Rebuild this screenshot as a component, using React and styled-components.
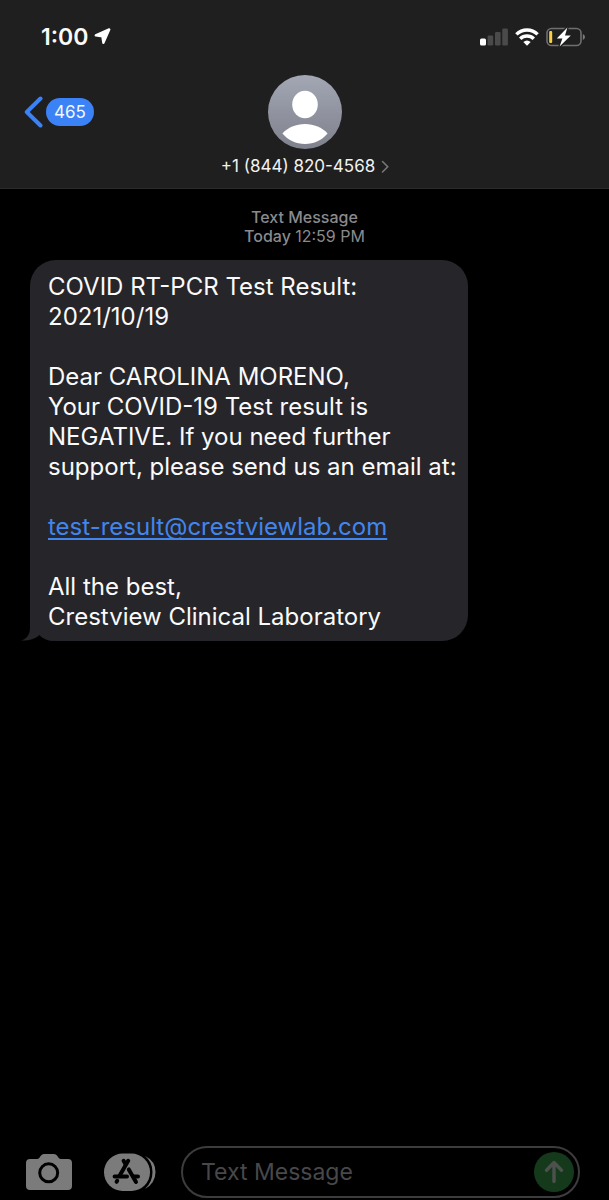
import React from "react";
import styled, { createGlobalStyle } from "styled-components";

const GlobalStyle = createGlobalStyle`
  * {
    box-sizing: border-box;
  }
  body {
    margin: 0;
    background-color: #000000;
    font-family: Inter, "Liberation Sans", sans-serif;
  }
`;

const Screen = styled.div`
  display: flex;
  flex-direction: column;
  min-height: 100vh;
  background-color: #000000;
  color: #fafafa;
`;
const Header = styled.header`
  background-color: #1f1f1f;
  border-bottom: 1px solid #2b2b2c;
`;
const StatusBar = styled.div`
  display: flex;
  align-items: center;
  justify-content: space-between;
  height: 75px;
  padding: 0 24px 2px 41px;
`;
const StatusGroup = styled.div`
  display: flex;
  align-items: center;
  gap: ${(props) => props.$gap};
`;
const Time = styled.span`
  font-size: 23px;
  line-height: 28px;
  font-weight: 600;
`;
const Nav = styled.nav`
  display: grid;
  grid-template-columns: 1fr auto 1fr;
  align-items: start;
  padding: 0 23px 11px 24px;
`;
const BackButton = styled.button`
  display: flex;
  align-items: center;
  justify-self: start;
  gap: 3px;
  height: 74px;
  padding: 0;
  border: none;
  background: none;
  font-family: inherit;
`;
const Badge = styled.span`
  padding: 0 8px;
  border-radius: 14px;
  background-color: #3b82f6;
  color: #f4f8ff;
  font-size: 17px;
  line-height: 28px;
`;
const Contact = styled.button`
  display: flex;
  flex-direction: column;
  align-items: center;
  gap: 7px;
  padding: 0;
  border: none;
  background: none;
  color: #f2f2f2;
  font-family: inherit;
`;
const ContactName = styled.span`
  display: flex;
  align-items: center;
  gap: 6px;
  font-size: 17px;
  line-height: 21px;
`;
const Thread = styled.main`
  flex: 1;
  padding: 19px 30px;
`;
const Stamp = styled.p`
  margin: 0 0 14px;
  color: #8a8a8d;
  font-size: 16px;
  line-height: 19px;
  font-weight: 500;
  text-align: center;
`;
const StampTime = styled.span`
  font-weight: 400;
`;
const Bubble = styled.div`
  position: relative;
  width: fit-content;
  max-width: 82%;
  padding: 12px 11px 9px 18px;
  border-radius: 26px;
  background-color: #26252a;
`;
const Tail = styled.svg`
  position: absolute;
  left: -9px;
  bottom: 0;
`;
const BubbleText = styled.p`
  position: relative;
  margin: 0 0 30px;
  font-size: 24px;
  line-height: 30px;

  &:last-child {
    margin-bottom: 0;
  }
`;
const MailLink = styled.a`
  color: #4285ec;
  text-decoration: underline;
  text-decoration-thickness: 2px;
  text-decoration-skip-ink: none;
  text-underline-offset: 3px;
`;
const Composer = styled.form`
  display: flex;
  align-items: center;
  padding: 0 29px 2px 26px;
`;
const IconButton = styled.button`
  display: flex;
  margin-right: ${(props) => props.$space};
  padding: 0;
  border: none;
  background: none;
`;
const Field = styled.div`
  display: flex;
  flex: 1;
  align-items: center;
  min-width: 0;
  height: 52px;
  padding: 0 4px 0 18px;
  border: 2px solid #3c3c3e;
  border-radius: 26px;
`;
const Input = styled.input`
  flex: 1;
  min-width: 0;
  padding: 0;
  border: none;
  outline: none;
  background: none;
  color: #fafafa;
  font-family: inherit;
  font-size: 23px;
  line-height: 30px;

  &::placeholder {
    color: #48484a;
    opacity: 1;
  }
`;
const SendButton = styled.button`
  display: flex;
  align-items: center;
  justify-content: center;
  width: 40px;
  height: 40px;
  padding: 0;
  border: none;
  border-radius: 50%;
  background-color: #153a1b;
`;

const LocationIcon = () => (
  <svg width="17" height="17" viewBox="0 0 17 17">
    <path
      d="M1.8 7.4 15.2 1.4 9.4 14.8 8.4 8.2Z"
      fill="#ffffff"
      stroke="#ffffff"
      strokeWidth="2.4"
      strokeLinejoin="round"
    />
  </svg>
);

const SignalIcon = () => (
  <svg width="28" height="18" viewBox="0 0 28 18">
    <rect x="0" y="10.5" width="6" height="7" rx="1.5" fill="#ffffff" />
    <rect x="7.6" y="7.5" width="5.6" height="10" rx="1.2" fill="#4a4a4a" />
    <rect x="15" y="4" width="5.6" height="13.5" rx="1.2" fill="#4a4a4a" />
    <rect x="22.3" y="0.5" width="5.6" height="17" rx="1.2" fill="#4a4a4a" />
  </svg>
);

const WifiIcon = () => (
  <svg width="24" height="18" viewBox="0 0 24 18">
    <g fill="none" stroke="#ffffff" strokeWidth="3.4">
      <path d="M1.4 6.4A15 15 0 0 1 22.6 6.4" />
      <path d="M5.2 10.8A9.6 9.6 0 0 1 18.8 10.8" />
    </g>
    <path d="M8.3 14Q12 11 15.7 14L12 17.8Z" fill="#ffffff" />
  </svg>
);

const BatteryIcon = () => (
  <svg width="39" height="20" viewBox="0 0 39 20">
    <rect x="1" y="1.5" width="34" height="17" rx="4.5" fill="none" stroke="#6f6f6f" strokeWidth="1.6" />
    <path d="M36.8 7Q39 8 39 10T36.8 13Z" fill="#7a7a7a" />
    <rect x="3.2" y="4" width="3" height="12" rx="1" fill="#f7ce46" />
    <path
      d="M21.4.4 10.8 11.4H16.4L13.6 19.6 24.8 8.4H19Z"
      fill="#ffffff"
      stroke="#1f1f1f"
      strokeWidth="2.6"
      strokeLinejoin="round"
      paintOrder="stroke"
    />
  </svg>
);

const BackIcon = () => (
  <svg width="19" height="32" viewBox="0 0 19 32">
    <path
      d="M16.5 2.5 2.8 16 16.5 29.5"
      fill="none"
      stroke="#3b82f6"
      strokeWidth="4"
      strokeLinecap="round"
      strokeLinejoin="round"
    />
  </svg>
);

const Avatar = () => (
  <svg width="74" height="74" viewBox="0 0 74 74">
    <defs>
      <linearGradient id="avatar" x1="0" y1="0" x2="0" y2="1">
        <stop offset="0" stopColor="#a3a7b4" />
        <stop offset="1" stopColor="#7f818c" />
      </linearGradient>
    </defs>
    <circle cx="37" cy="37" r="37" fill="url(#avatar)" />
    <ellipse cx="37" cy="29.5" rx="12.8" ry="13.8" fill="#ffffff" />
    <path d="M14.4 58.5C20 52.5 28 49 37 49S54 52.5 59.6 58.5C54 65 46 69 37 69S20 65 14.4 58.5Z" fill="#ffffff" />
  </svg>
);

const ChevronIcon = () => (
  <svg width="8" height="13" viewBox="0 0 8 13">
    <path d="M1.5 1.5 6.7 6.8 1.5 12" fill="none" stroke="#77777b" strokeWidth="1.6" strokeLinecap="round" />
  </svg>
);

const CameraIcon = () => (
  <svg width="46" height="36" viewBox="0 0 46 36">
    <path
      d="M4 5H11Q12.5 5 13.4 3.8L14.8 1.8Q16 0 18 0H28Q30 0 31.2 1.8L32.6 3.8Q33.5 5 35 5H42Q46 5 46 9V32Q46 36 42 36H4Q0 36 0 32V9Q0 5 4 5Z"
      fill="#7b7b7b"
    />
    <circle cx="22.7" cy="18.8" r="9" fill="none" stroke="#000000" strokeWidth="3" />
  </svg>
);

const AppStoreIcon = () => (
  <svg width="52" height="38" viewBox="0 0 52 38">
    <path d="M41 3Q51.5 8 51.5 19T41 36Q48.5 29 48.5 19T41 3Z" fill="#7b7b7b" />
    <rect x="0" y="0.5" width="46" height="37.5" rx="18.7" fill="#7b7b7b" />
    <g stroke="#000000" strokeWidth="4" strokeLinecap="round">
      <path d="M24.2 7.8 15.6 22.8M13.2 27.8 12.6 28.8" />
      <path d="M19.6 7.8 21.6 11.4M24.8 16.4 32 29" />
      <path d="M10.6 23.4H23M30 23.4H34" />
    </g>
  </svg>
);

const SendIcon = () => (
  <svg width="20" height="24" viewBox="0 0 20 24">
    <path
      d="M10 21.5V3M2.5 10.2 10 2.5 17.5 10.2"
      fill="none"
      stroke="#4d504d"
      strokeWidth="3.4"
      strokeLinecap="round"
      strokeLinejoin="round"
    />
  </svg>
);

const App = () => {
  return (
    <Screen>
      <GlobalStyle />
      <Header>
        <StatusBar>
          <StatusGroup $gap="6px">
            <Time>1:00</Time>
            <LocationIcon />
          </StatusGroup>
          <StatusGroup $gap="7px">
            <SignalIcon />
            <WifiIcon />
            <BatteryIcon />
          </StatusGroup>
        </StatusBar>
        <Nav>
          <BackButton type="button">
            <BackIcon />
            <Badge>465</Badge>
          </BackButton>
          <Contact type="button">
            <Avatar />
            <ContactName>
              +1 (844) 820-4568
              <ChevronIcon />
            </ContactName>
          </Contact>
        </Nav>
      </Header>
      <Thread>
        <Stamp>
          Text Message
          <br />
          Today <StampTime>12:59 PM</StampTime>
        </Stamp>
        <Bubble>
          <Tail width="34" height="25" viewBox="0 0 34 25">
            <path d="M9 0V12C9 18 6 23 0 24.5C7 25 14 23 18.5 19C22.5 23 27 25 33 25V0Z" fill="#26252a" />
          </Tail>
          <BubbleText>
            COVID RT-PCR Test Result:
            <br />
            2021/10/19
          </BubbleText>
          <BubbleText>
            Dear CAROLINA MORENO,
            <br />
            Your COVID-19 Test result is
            <br />
            NEGATIVE. If you need further
            <br />
            support, please send us an email at:
          </BubbleText>
          <BubbleText>
            <MailLink href="mailto:test-result@crestviewlab.com">
              test-result@crestviewlab.com
            </MailLink>
          </BubbleText>
          <BubbleText>
            All the best,
            <br />
            Crestview Clinical Laboratory
          </BubbleText>
        </Bubble>
      </Thread>
      <Composer>
        <IconButton type="button" aria-label="Camera" $space="32px">
          <CameraIcon />
        </IconButton>
        <IconButton type="button" aria-label="Apps" $space="25px">
          <AppStoreIcon />
        </IconButton>
        <Field>
          <Input type="text" aria-label="Text Message" placeholder="Text Message" />
          <SendButton type="button" aria-label="Send">
            <SendIcon />
          </SendButton>
        </Field>
      </Composer>
    </Screen>
  );
};

export default App;
